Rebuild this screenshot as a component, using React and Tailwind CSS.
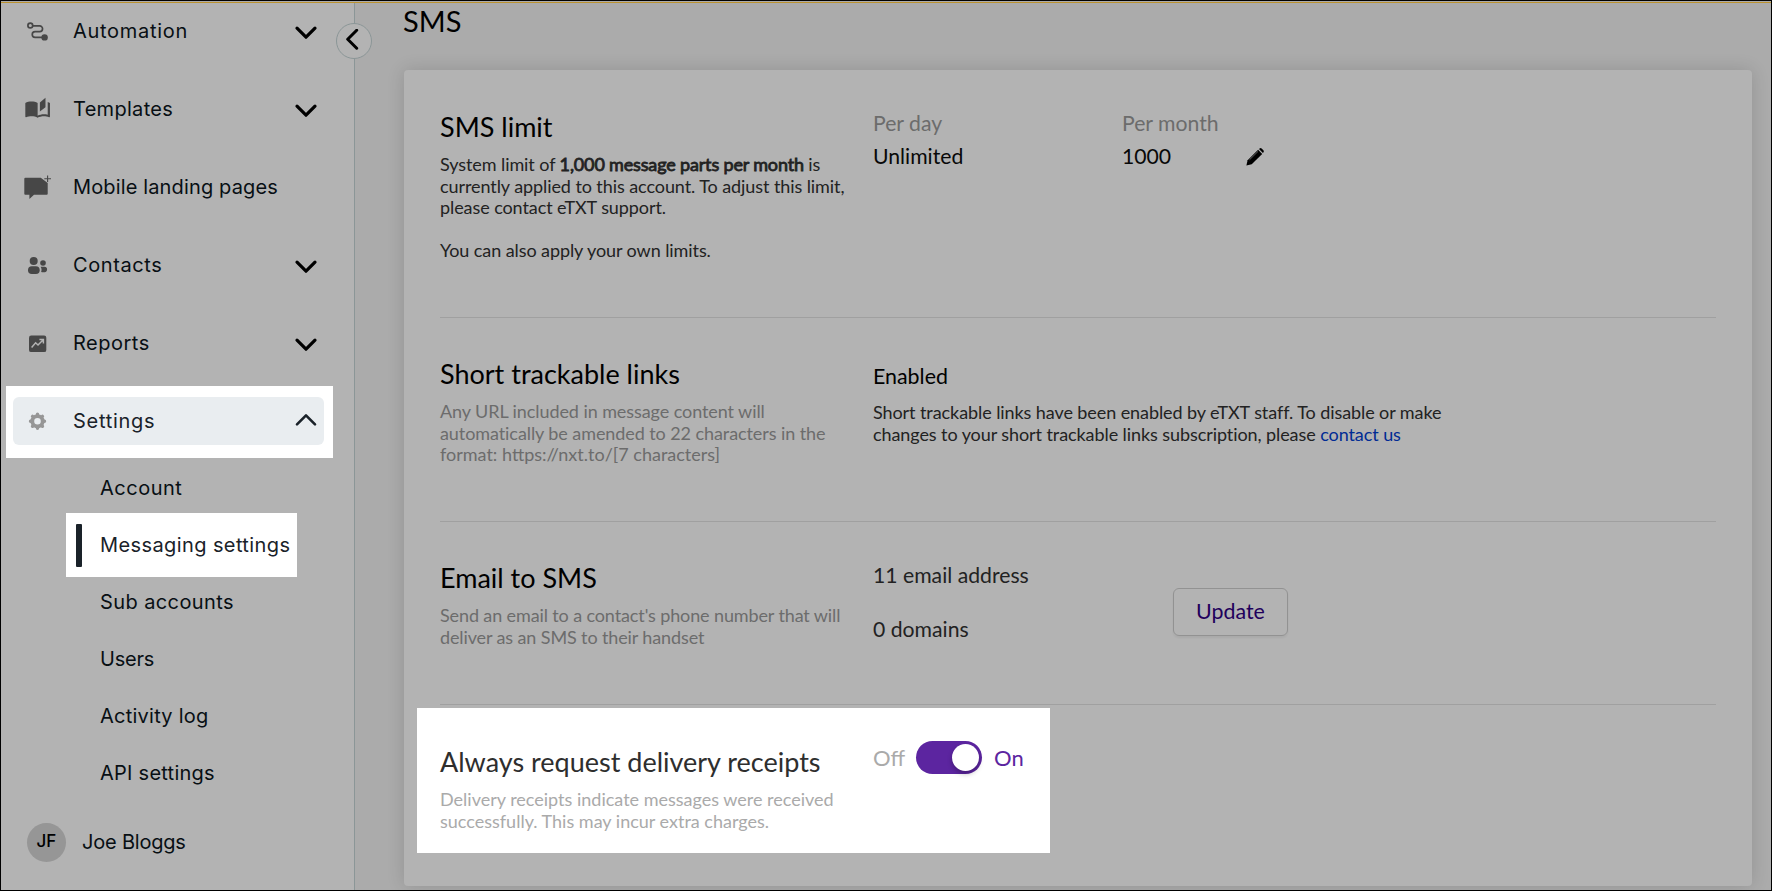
import { useState } from 'react';

const AutomationIcon = () => (
  <svg className="w-7 h-7" viewBox="0 0 28 28" fill="none" stroke="currentColor" strokeWidth="1.7">
    <circle cx="6.3" cy="8.5" r="2.4" />
    <path d="M9 8.9h6.7a2.8 2.8 0 010 5.7h-4.6a2.8 2.8 0 000 5.7h7" />
    <circle cx="20.6" cy="20.4" r="3.2" fill="currentColor" stroke="none" />
  </svg>
);

const TemplatesIcon = () => (
  <svg className="w-7 h-7" viewBox="0 0 28 28" fill="currentColor">
    <path
      transform="translate(0.2 2.2) scale(1.12 0.95)"
      d="M19 .5l-5 5V15l5-4.5V.5zM1 6v14.65c0 .25.25.5.5.5.1 0 .15-.05.25-.05C3.1 20.45 5.05 20 6.5 20c1.95 0 4.05.4 5.5 1.5V6c-1.45-1.1-3.55-1.5-5.5-1.5-1.95 0-4.05.4-5.5 1.5zm22 13.5V6c-.6-.45-1.25-.75-2-1v13.5c-1.1-.35-2.3-.5-3.5-.5-1.7 0-4.15.65-5.5 1.5v2c1.35-.85 3.8-1.5 5.5-1.5 1.65 0 3.35.3 4.75 1.05.1.05.15.05.25.05.25 0 .5-.25.5-.5v-1.1z"
    />
  </svg>
);

const LandingIcon = () => (
  <svg className="w-7 h-7" viewBox="0 0 28 28" fill="currentColor">
    <path d="M1.5 4.8h15.3l6.9 5.2v10.8q0 .9-.9.9H10l-4.6 4.3v-4.3H1.2q-.9 0-.9-.9V5.7q0-.9 1.2-.9z" />
    <path d="M23.6 2.4v6.7M20.3 5.7H27" stroke="currentColor" strokeWidth="1.1" fill="none" />
  </svg>
);

const ContactsIcon = () => (
  <svg className="w-7 h-7" viewBox="0 0 28 28" fill="currentColor">
    <circle cx="9.7" cy="10" r="4" />
    <rect x="4" y="15.2" width="11.7" height="7.8" rx="3.8" />
    <circle cx="19" cy="12" r="2.8" />
    <path d="M16.6 15.7h3.8a2.7 2.7 0 012.7 2.7c0 2-1.5 2.9-3.6 2.9-.9 0-1.7-.1-2.4-.4.7-1.7.6-3.7-.5-5.2z" />
  </svg>
);

const ReportsIcon = () => (
  <svg className="w-7 h-7" viewBox="0 0 28 28" fill="none">
    <rect x="5" y="6.5" width="17.3" height="16.6" rx="2.2" fill="currentColor" />
    <path d="M7.6 18.4l4-4.6 2.4 2.2 5-5M15.4 10.5h4v4" stroke="#b3b3b3" strokeWidth="1.5" />
  </svg>
);

const SettingsIcon = () => (
  <svg className="w-7 h-7" viewBox="0 0 28 28" fill="none" stroke="currentColor">
    <circle cx="13.5" cy="14.3" r="5.2" strokeWidth="3.8" />
    <path
      d="M13.5 7.3v14M6.5 14.3h14M8.55 9.35l9.9 9.9M18.45 9.35l-9.9 9.9"
      strokeWidth="3.4"
      strokeLinecap="round"
      strokeDasharray="0.1 13.8"
    />
  </svg>
);

const Chevron = ({ open }) => (
  <svg className="w-6 h-6" viewBox="0 0 24 24" fill="none" stroke="currentColor" strokeWidth={open ? 2.6 : 3.2} strokeLinecap="round" strokeLinejoin="round">
    <path d={open ? 'M3 15.3l9-9 9 9' : 'M3 9.2l9 9 9-9'} />
  </svg>
);

const navItems = [
  { label: 'Automation', icon: AutomationIcon, expandable: true, tracking: 'tracking-[0.7px]' },
  { label: 'Templates', icon: TemplatesIcon, expandable: true, tracking: 'tracking-[0.3px]' },
  { label: 'Mobile landing pages', icon: LandingIcon, expandable: false, tracking: 'tracking-[0.14px]' },
  { label: 'Contacts', icon: ContactsIcon, expandable: true, tracking: 'tracking-[0.6px]' },
  { label: 'Reports', icon: ReportsIcon, expandable: true, tracking: 'tracking-[0.5px]' },
];

const settingsItems = [
  { label: 'Account', tracking: 'tracking-[0.5px]' },
  { label: 'Messaging settings', tracking: 'tracking-[0.4px]', active: true },
  { label: 'Sub accounts', tracking: 'tracking-[0.4px]' },
  { label: 'Users', tracking: 'tracking-[-0.2px]' },
  { label: 'Activity log', tracking: 'tracking-[0.24px]' },
  { label: 'API settings', tracking: 'tracking-[0.25px]' },
];

function Sidebar() {
  return (
    <aside className="relative w-[354px] shrink-0 bg-[#b3b3b3] border-r border-[#8b9697] font-['Inter',sans-serif] text-[20px] text-[#080f14]">
      <nav className="-mt-[11px]">
        {navItems.map((item) => (
          <div key={item.label} className="flex h-[78px] items-center pl-[23px] pr-9">
            <span className="text-[#474747]"><item.icon /></span>
            <span className={`ml-[21px] flex-1 ${item.tracking}`}>{item.label}</span>
            {item.expandable && <span className="text-black"><Chevron /></span>}
          </div>
        ))}

        <div className="mt-1 ml-[5px] flex h-[72px] w-[327px] items-center bg-white pb-0.5 pl-[7px]">
          <div className="flex h-12 w-[311px] items-center rounded-md bg-[#e9edf0] pl-[11px] pr-1.5">
            <span className="text-[#969696]"><SettingsIcon /></span>
            <span className="ml-[21px] flex-1 tracking-[0.7px] text-[#1a2229]">Settings</span>
            <span className="text-[#1a2229]"><Chevron open /></span>
          </div>
        </div>

        <ul className="mt-[1.5px]">
          {settingsItems.map((item) =>
            item.active ? (
              <li key={item.label} className="flex h-[57px] items-center pl-[65px]">
                <div className="flex h-16 w-[231px] shrink-0 items-center bg-white pl-2.5 text-[#1a2229]">
                  <span className="h-[43px] w-1.5 rounded-[1px] bg-[#1a2229]"></span>
                  <span className={`ml-[18px] whitespace-nowrap ${item.tracking}`}>{item.label}</span>
                </div>
              </li>
            ) : (
              <li key={item.label} className={`flex h-[57px] items-center pl-[99px] ${item.tracking}`}>{item.label}</li>
            )
          )}
        </ul>

        <div className="mt-[21px] flex items-center pl-[26px]">
          <span className="flex h-[39px] w-[39px] items-center justify-center rounded-full bg-[#969696] text-[17px] font-medium text-black">JF</span>
          <span className="ml-4 tracking-[-0.2px]">Joe Bloggs</span>
        </div>
      </nav>

      <button className="absolute -right-[18px] top-5 flex h-9 w-9 items-center justify-center rounded-full border border-[#8b9697] bg-[#b3b3b3] text-black">
        <svg className="h-6 w-6" viewBox="0 0 24 24" fill="none" stroke="currentColor" strokeWidth="3" strokeLinecap="round" strokeLinejoin="round">
          <path d="M14.7 1.2L5.7 10.2l9 9" />
        </svg>
      </button>
    </aside>
  );
}

function Section({ title, description, muted, children }) {
  return (
    <section className="flex pt-10">
      <div className="w-[433px] shrink-0">
        <h2 className="text-[27px] leading-8 text-black">{title}</h2>
        <div className={`mt-[11px] w-[425px] text-[18px] leading-[21.6px] tracking-[-0.08px] ${muted ? 'text-[#6c6c6c]' : 'text-[#222]'}`}>{description}</div>
      </div>
      {children}
    </section>
  );
}

export default function App() {
  const [receipts, setReceipts] = useState(true);

  return (
    <div className="flex h-[891px] w-[1772px] flex-col overflow-hidden border border-black bg-[#ababab] font-['Lato',sans-serif]">
      <div className="mt-px h-px shrink-0 bg-[#bb922f]"></div>
      <div className="flex min-h-0 flex-1">
        <Sidebar />

        <main className="flex-1 pl-[49px] pr-[19px]">
          <h1 className="-ml-px h-[67px] text-[29px] leading-9 text-black">SMS</h1>

          <div className="h-[816px] rounded bg-[#b3b3b3] px-9 shadow-[0_0_18px_rgba(0,0,0,0.14)]">
            <div className="h-[248px] border-b border-[#a0a0a0] pt-px">
              <Section
                title="SMS limit"
                description={
                  <>
                    System limit of <span className="tracking-[-0.16px] [-webkit-text-stroke:0.8px_#222]">1,000 message parts per month</span> is
                    <br />currently applied to this account. To adjust this limit,
                    <br />please contact eTXT support.
                    <br /><br />You can also apply your own limits.
                  </>
                }
              >
                <div className="-mt-1 w-[249px] text-[21.2px] leading-[33px]">
                  <p className="text-[#6c6c6c]">Per day</p>
                  <p className="text-[#080808]">Unlimited</p>
                </div>
                <div className="-mt-1 text-[21.2px] leading-[33px]">
                  <p className="text-[#6c6c6c]">Per month</p>
                  <div className="flex items-center text-[#080808]">
                    <span className="w-[124px]">1000</span>
                    <svg className="h-[18px] w-[18px]" viewBox="0 0 18 18" fill="black">
                      <path d="M.4 17.5l1.2-5.2L12.1 1.8l4.1 4.1L5.7 16.3z" />
                      <path d="M13 1l.6-.6q1-.7 2 .1l1.8 1.8q.8 1 .1 2l-.6.6z" />
                      <path d="M3.5 11.8L12 3.4" stroke="#777" strokeWidth="0.8" />
                    </svg>
                  </div>
                </div>
              </Section>
            </div>

            <div className="h-[204px] border-b border-[#a0a0a0]">
              <Section
                muted
                title="Short trackable links"
                description={
                  <>
                    Any URL included in message content will
                    <br />automatically be amended to 22 characters in the
                    <br /><span className="tracking-normal">format: https://nxt.to/[7 characters]</span>
                  </>
                }
              >
                <div>
                  <h3 className="pt-0.5 text-[21.4px] leading-8 text-black">Enabled</h3>
                  <p className="mt-2.5 text-[18px] leading-[21.6px] tracking-[-0.08px] text-[#222]">
                    Short trackable links have been enabled by eTXT staff. To disable or make
                    <br />changes to your short trackable links subscription, please <a href="#" className="text-[#002b94]">contact us</a>
                  </p>
                </div>
              </Section>
            </div>

            <div className="h-[183px] border-b border-[#a0a0a0]">
              <Section
                muted
                title="Email to SMS"
                description={
                  <span className="tracking-[-0.12px]">
                    Send an email to a contact's phone number that will
                    <br />deliver as an SMS to their handset
                  </span>
                }
              >
                <div className="-mt-0.5 w-[300px] text-[21.2px] leading-[30px] text-[#222]">
                  <p>11 email address</p>
                  <p className="mt-6">0 domains</p>
                </div>
                <button className="mt-[26px] h-12 w-[115px] rounded-md border border-[#929292] pb-0.5 text-[21.4px] text-[#1f005c] shadow-[0_2px_2px_rgba(0,0,0,0.05)]">Update</button>
              </Section>
            </div>

            <div className="mt-[3px] -ml-[23px] flex h-[145px] w-[633px] bg-white pl-[23px]">
              <div className="w-[433px] shrink-0 pt-[38px]">
                <h2 className="text-[27px] leading-8 text-[#2e2e2e]">Always request delivery receipts</h2>
                <p className="mt-[11px] text-[18px] leading-[21.6px] text-[#aaa]">
                  Delivery receipts indicate messages were received
                  <br />successfully. This may incur extra charges.
                </p>
              </div>
              <div className="mt-[33px] flex h-[33px] items-center text-[22px]">
                <span className="w-[43px] text-[#aaa]">Off</span>
                <button
                  onClick={() => setReceipts(!receipts)}
                  className={`flex h-[33px] w-[66px] items-center rounded-full bg-[#5c25a0] px-[3px] ${receipts ? 'justify-end' : 'justify-start'}`}
                >
                  <span className="h-[27px] w-[27px] rounded-full bg-white shadow-[0_3px_5px_rgba(0,0,0,0.25)]"></span>
                </button>
                <span className="ml-3 text-[#5c25a0]">On</span>
              </div>
            </div>
          </div>
        </main>
      </div>
    </div>
  );
}
